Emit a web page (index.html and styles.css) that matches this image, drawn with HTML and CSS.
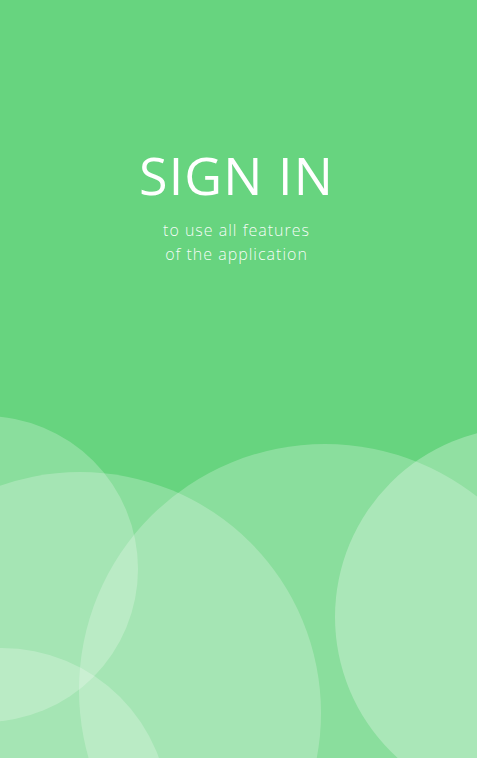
FILE: index.html
```html
<!DOCTYPE html>
<html lang="en">
<head>
<meta charset="utf-8">
<title>Sign in</title>
<link rel="stylesheet" href="styles.css">
</head>
<body>
<main class="screen">
  <header class="intro">
    <h1 class="title">SIGN IN</h1>
    <p class="subtitle">to use all features<br>of the application</p>
  </header>
  <div class="bubbles" aria-hidden="true">
    <span class="bubble b-a"></span>
    <span class="bubble b-c"></span>
    <span class="bubble b-d"></span>
    <span class="bubble b-e"></span>
    <span class="bubble b-f"></span>
  </div>
</main>
</body>
</html>
```
FILE: styles.css
```css
* { box-sizing: border-box; }
html, body { margin: 0; padding: 0; }
body { background: #67d47f; }
.screen {
  position: relative;
  width: 477px;
  height: 758px;
  overflow: hidden;
  background: #67d47f;
  font-family: "Open Sans", "Liberation Sans", sans-serif;
  color: #fff;
}
.intro {
  display: flex;
  flex-direction: column;
  align-items: center;
  padding-top: 143px;
  padding-right: 4px;
}
.title {
  margin: 0;
  font-size: 52px;
  font-weight: 400;
  line-height: 64px;
  letter-spacing: 1.1px;
}
.subtitle {
  margin: 11px 0 0;
  font-size: 16px;
  font-weight: 300;
  line-height: 24px;
  letter-spacing: 1px;
  text-align: center;
  color: rgba(255,255,255,0.95);
}
.bubbles { position: absolute; inset: 0; pointer-events: none; }
.bubble {
  position: absolute;
  border-radius: 50%;
  background: rgba(255,255,255,0.235);
}
.b-a { left: -168px; top: 416px; width: 306px; height: 306px; }
.b-c { left: -161px; top: 472px; width: 482px; height: 482px; }
.b-d { left: 79px; top: 444px; width: 492px; height: 492px; }
.b-e { left: 335px; top: 427px; width: 380px; height: 380px; background: rgba(255,255,255,0.28); }
.b-f { left: -165px; top: 648px; width: 334px; height: 334px; }
```
